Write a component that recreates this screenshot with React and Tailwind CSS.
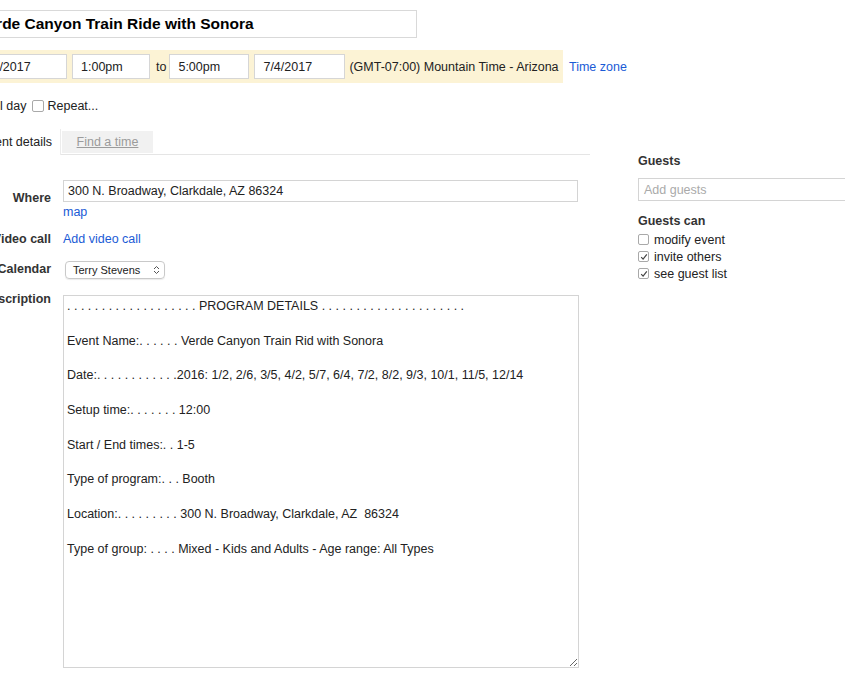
import React from 'react';

const description = [
  '. . . . . . . . . . . . . . . . . . . PROGRAM DETAILS . . . . . . . . . . . . . . . . . . . . .',
  '',
  'Event Name:. . . . . . Verde Canyon Train Rid with Sonora',
  '',
  'Date:. . . . . . . . . . . .2016: 1/2, 2/6, 3/5, 4/2, 5/7, 6/4, 7/2, 8/2, 9/3, 10/1, 11/5, 12/14',
  '',
  'Setup time:. . . . . . . 12:00',
  '',
  'Start / End times:. . 1-5',
  '',
  'Type of program:. . . Booth',
  '',
  'Location:. . . . . . . . . 300 N. Broadway, Clarkdale, AZ  86324',
  '',
  'Type of group: . . . . Mixed - Kids and Adults - Age range: All Types',
].join('\n');

const Check = ({ checked, size = 'w-[11px] h-[11px]' }) => (
  <span className={`${size} shrink-0 rounded-[2px] border border-[#a9a9a9] bg-white flex items-center justify-center`}>
    {checked && (
      <svg width="8" height="8" viewBox="0 0 8 8">
        <path d="M1.2 4.2 L3.1 6.2 L6.8 1.4" fill="none" stroke="#444" strokeWidth="1.2" />
      </svg>
    )}
  </span>
);

const Field = ({ value, className }) => (
  <div className={`h-[25px] shrink-0 bg-white border border-[#d6d6d6] flex items-center pl-2 ${className}`}>{value}</div>
);

const Row = ({ label, children, labelClass = '' }) => (
  <div className="flex">
    <div className={`w-[75px] shrink-0 text-right font-bold text-[#333] ${labelClass}`}>{label}</div>
    <div className="ml-3 flex-1">{children}</div>
  </div>
);

export default function App() {
  return (
    <div className="w-[845px] h-[684px] overflow-hidden bg-white font-['Liberation_Sans',Arial,sans-serif] text-[12.5px] leading-[16px] text-[#222]">
      <div className="ml-[-24px] pt-[10px] flex">
        {/* Left: event form */}
        <div className="w-[614px] shrink-0">
          <div className="ml-[-4px] w-[445px] h-[28px] border border-[#d9d9d9] flex items-center pl-[5px] text-[15.5px] font-bold text-black whitespace-nowrap">
            Verde Canyon Train Ride with Sonora
          </div>

          <div className="mt-3 flex items-center whitespace-nowrap">
            <div className="h-[33px] w-[587px] shrink-0 bg-[#fcf3d5] flex items-center">
              <Field value="7/4/2017" className="ml-[-3px] w-[94px]" />
              <Field value="1:00pm" className="w-[78px] ml-[5px]" />
              <span className="ml-[6px] mr-[3px]">to</span>
              <Field value="5:00pm" className="w-[80px]" />
              <Field value="7/4/2017" className="w-[91px] ml-[5px]" />
              <span className="ml-[4px]">(GMT-07:00) Mountain Time - Arizona</span>
            </div>
            <a className="ml-[6px] text-[#1a5bd6]">Time zone</a>
          </div>

          <div className="mt-[15px] flex items-center h-[16px] whitespace-nowrap">
            <span className="ml-[-2px]"><Check size="w-[12px] h-[12px]" /></span>
            <span className="ml-[3px]">All day</span>
            <span className="ml-[5px]"><Check size="w-[12px] h-[12px]" /></span>
            <span className="ml-[4px]">Repeat...</span>
          </div>

          <div className="mt-[16px] flex items-end h-[25px] border-b border-[#e5e5e5] whitespace-nowrap">
            <div className="w-[85px] h-[26px] -mb-px bg-white border-r border-[#ececec] flex items-center justify-end pr-2">
              Event details
            </div>
            <div className="ml-px w-[91px] h-[22px] mb-px bg-[#f1f1f1] flex items-center justify-center text-[#9b9b9b] underline">
              Find a time
            </div>
          </div>

          <div className="mt-[25px] flex flex-col whitespace-nowrap">
            <Row label="Where" labelClass="pt-[10px]">
              <div className="w-[515px] h-[22px] border border-[#d4d4d4] flex items-center pl-1">
                300 N. Broadway, Clarkdale, AZ 86324
              </div>
              <a className="block mt-[2px] text-[#1a5bd6]">map</a>
            </Row>
            <div className="mt-[11px]">
              <Row label="Video call">
                <a className="text-[#1a5bd6]">Add video call</a>
              </Row>
            </div>
            <div className="mt-[14px]">
              <Row label="Calendar">
                <div className="ml-[2px] w-[100px] h-[18px] rounded-[4px] border border-[#c9c9c9] shadow-[0_1px_1px_rgba(0,0,0,0.08)] flex items-center justify-between pl-[7px] pr-[4px] text-[11px] text-[#222]">
                  <span>Terry Stevens</span>
                  <svg width="7" height="10" viewBox="0 0 7 10">
                    <path d="M1 4 L3.5 1.5 L6 4 M1 6 L3.5 8.5 L6 6" fill="none" stroke="#555" strokeWidth="1" />
                  </svg>
                </div>
              </Row>
            </div>
            <div className="mt-[16px]">
              <Row label="Description" labelClass="-mt-[4px]">
                <textarea
                  readOnly
                  value={description}
                  className="block w-[516px] h-[373px] border border-[#d4d4d4] px-[3px] pt-[2px] text-[12.5px] leading-[17.35px] text-[#222] outline-none resize"
                />
              </Row>
            </div>
          </div>
        </div>

        {/* Right: guests */}
        <div className="ml-[48px] pt-[143px] w-[240px] shrink-0 whitespace-nowrap">
          <div className="font-bold text-[#333]">Guests</div>
          <div className="mt-[9px] h-[23px] w-[240px] border border-[#d4d4d4] flex items-center pl-[5px] text-[#aaa]">
            Add guests
          </div>
          <div className="mt-[12px] font-bold text-[#333]">Guests can</div>
          <div className="mt-[2px] flex flex-col">
            <label className="flex items-center gap-[5px] h-[17px]"><Check />modify event</label>
            <label className="flex items-center gap-[5px] h-[17px]"><Check checked />invite others</label>
            <label className="flex items-center gap-[5px] h-[17px]"><Check checked />see guest list</label>
          </div>
        </div>
      </div>
    </div>
  );
}
